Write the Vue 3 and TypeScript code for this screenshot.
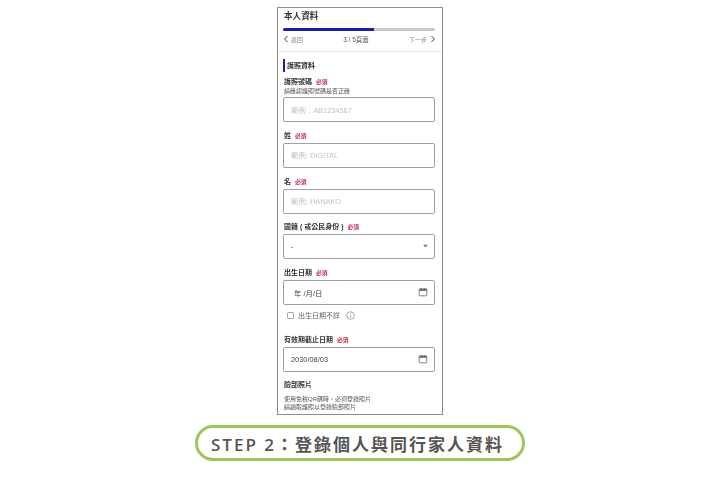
<template>
  <div class="page">
    <div class="phone">
      <div class="title">本人資料</div>
      <div class="progress"><div class="progress-fill" :style="{ width: progress + '%' }"></div></div>
      <div class="pager">
        <span class="pager-link">
          <svg class="chev" viewBox="0 0 6 8"><path d="M4.5 1 L1.5 4 L4.5 7" /></svg>
          返回
        </span>
        <span class="pager-count">3 / 5頁面</span>
        <span class="pager-link">
          下一步
          <svg class="chev next" viewBox="0 0 6 8"><path d="M1.5 1 L4.5 4 L1.5 7" /></svg>
        </span>
      </div>

      <div class="form">
        <div class="section">護照資料</div>

        <div class="field first">
          <div class="label">護照號碼 <span class="req">必須</span></div>
          <div class="hint">請確認護照號碼是否正確</div>
          <div class="input placeholder">範例：AB1234567</div>
        </div>

        <div v-for="f in nameFields" :key="f.label" class="field">
          <div class="label">{{ f.label }} <span class="req">必須</span></div>
          <div class="input placeholder">{{ f.placeholder }}</div>
        </div>

        <div class="field">
          <div class="label">國籍 ( 或公民身份 ) <span class="req">必須</span></div>
          <div class="input select">
            <span>-</span>
            <svg class="caret" viewBox="0 0 8 5"><path d="M1 1 H7 L4 4.5 Z" /></svg>
          </div>
        </div>

        <div class="field">
          <div class="label">出生日期 <span class="req">必須</span></div>
          <div class="input date empty">
            <span>年 /月/日</span>
            <svg class="cal" viewBox="0 0 10 10">
              <rect x="1.2" y="1.8" width="7.6" height="7" rx="0.6" />
              <path class="cal-head" d="M1.2 2 H8.8 V4 H1.2 Z" />
              <path d="M3 1 V2 M7 1 V2" />
            </svg>
          </div>
          <div class="unknown">
            <span class="box"></span>
            <span>出生日期不詳</span>
            <svg class="info" viewBox="0 0 10 10">
              <circle cx="5" cy="5" r="4.2" />
              <path d="M5 4.4 V7.4 M5 2.6 V3.4" />
            </svg>
          </div>
        </div>

        <div class="field expiry">
          <div class="label">有效期截止日期 <span class="req">必須</span></div>
          <div class="input date">
            <span>2030/08/03</span>
            <svg class="cal" viewBox="0 0 10 10">
              <rect x="1.2" y="1.8" width="7.6" height="7" rx="0.6" />
              <path class="cal-head" d="M1.2 2 H8.8 V4 H1.2 Z" />
              <path d="M3 1 V2 M7 1 V2" />
            </svg>
          </div>
        </div>

        <div class="field photo">
          <div class="label">臉部照片</div>
          <div class="note">使用免稅QR碼時，必須登錄照片<br />請讀取護照以登錄臉部照片</div>
        </div>
      </div>
    </div>

    <div class="caption">STEP 2：登錄個人與同行家人資料</div>
  </div>
</template>

<script setup lang="ts">
interface NameField {
  label: string
  placeholder: string
}

const progress: number = 60

const nameFields: Array<NameField> = [
  { label: '姓', placeholder: '範例: DIGITAL' },
  { label: '名', placeholder: '範例: HANAKO' },
]
</script>

<style>
html,
body {
  margin: 0;
  background: #fff;
}
</style>

<style scoped>
.page {
  width: 720px;
  height: 480px;
  overflow: hidden;
  display: flex;
  flex-direction: column;
  align-items: center;
  font-family: 'Liberation Sans', 'Noto Sans CJK TC', sans-serif;
  color: #333;
  background: #fff;
}
.phone {
  box-sizing: border-box;
  width: 166px;
  height: 408px;
  margin-top: 7px;
  border: 1px solid #8e8e8e;
  overflow: hidden;
  background: #fff;
  filter: blur(0.4px);
}
.title {
  height: 20px;
  padding: 1px 0 0 6px;
  box-sizing: border-box;
  font-size: 8.6px;
  line-height: 14px;
  font-weight: 700;
  color: #333;
}
.progress {
  height: 3px;
  margin: 0 7px 0 5px;
  border-radius: 2px;
  background: #c8c8c8;
  overflow: hidden;
}
.progress-fill {
  height: 100%;
  background: #1a1fa8;
}
.pager {
  height: 20px;
  padding: 0 6px 0 5px;
  display: flex;
  justify-content: space-between;
  align-items: flex-start;
  border-bottom: 1px solid #e4e4e4;
  font-size: 6px;
}
.pager-link {
  display: flex;
  align-items: center;
  gap: 2px;
  height: 12px;
  margin-top: 2px;
  color: #8a8a95;
}
.pager-count {
  margin-top: 5px;
  line-height: 8px;
  font-size: 6.5px;
  color: #555;
}
.chev {
  width: 6px;
  height: 8px;
  fill: none;
  stroke: #3a3a70;
  stroke-width: 1;
}
.next {
  margin-left: 1px;
}
.form {
  padding: 7px 7px 0 5px;
}
.section {
  height: 13px;
  padding-left: 2px;
  border-left: 2px solid #1a1fa8;
  font-size: 7px;
  font-weight: 700;
  line-height: 13px;
}
.field {
  margin-top: 8.8px;
}
.field.first {
  margin-top: 5px;
}
.label {
  height: 10px;
  padding-left: 1px;
  font-size: 7px;
  font-weight: 700;
  line-height: 10px;
  color: #333;
}
.req {
  margin-left: 2px;
  font-size: 5.8px;
  color: #c0304a;
}
.hint {
  height: 8px;
  padding-left: 1px;
  font-size: 6px;
  line-height: 8px;
  color: #555;
}
.input {
  box-sizing: border-box;
  height: 25px;
  margin-top: 2px;
  padding: 0 7px 1px;
  border: 1px solid #a0a0a0;
  border-radius: 2px;
  display: flex;
  align-items: center;
  font-size: 7.4px;
  color: #444;
}
.placeholder {
  color: #c2c2c2;
}
.select {
  justify-content: space-between;
  padding-right: 5px;
}
.caret {
  width: 7px;
  height: 4px;
  fill: #777;
}
.date {
  justify-content: space-between;
  padding-right: 6px;
}
.date.empty {
  padding-left: 10px;
}
.cal {
  width: 10px;
  height: 10px;
  fill: none;
  stroke: #666;
  stroke-width: 0.8;
}
.cal-head {
  fill: #777;
  stroke: none;
}
.unknown {
  height: 20px;
  padding-left: 4px;
  display: flex;
  align-items: center;
  font-size: 7px;
  color: #666;
}
.box {
  box-sizing: border-box;
  width: 7px;
  height: 7px;
  margin-right: 4px;
  border: 1px solid #aaa;
  border-radius: 1px;
}
.info {
  width: 9px;
  height: 9px;
  margin-left: 6px;
  fill: none;
  stroke: #777;
  stroke-width: 0.7;
}
.expiry {
  margin-top: 10px;
}
.photo {
  margin-top: 8px;
}
.note {
  margin-top: 5px;
  padding-left: 1px;
  font-size: 6px;
  line-height: 8px;
  color: #555;
}
.caption {
  box-sizing: border-box;
  height: 36px;
  width: 330px;
  margin-top: 10px;
  padding-right: 5px;
  border: 3px solid #9cc65c;
  border-radius: 18px;
  display: flex;
  justify-content: center;
  align-items: center;
  font-family: 'Open Sans', 'Noto Sans CJK TC', sans-serif;
  font-size: 17px;
  font-weight: 600;
  letter-spacing: 2px;
  color: #555;
  white-space: nowrap;
}
</style>
